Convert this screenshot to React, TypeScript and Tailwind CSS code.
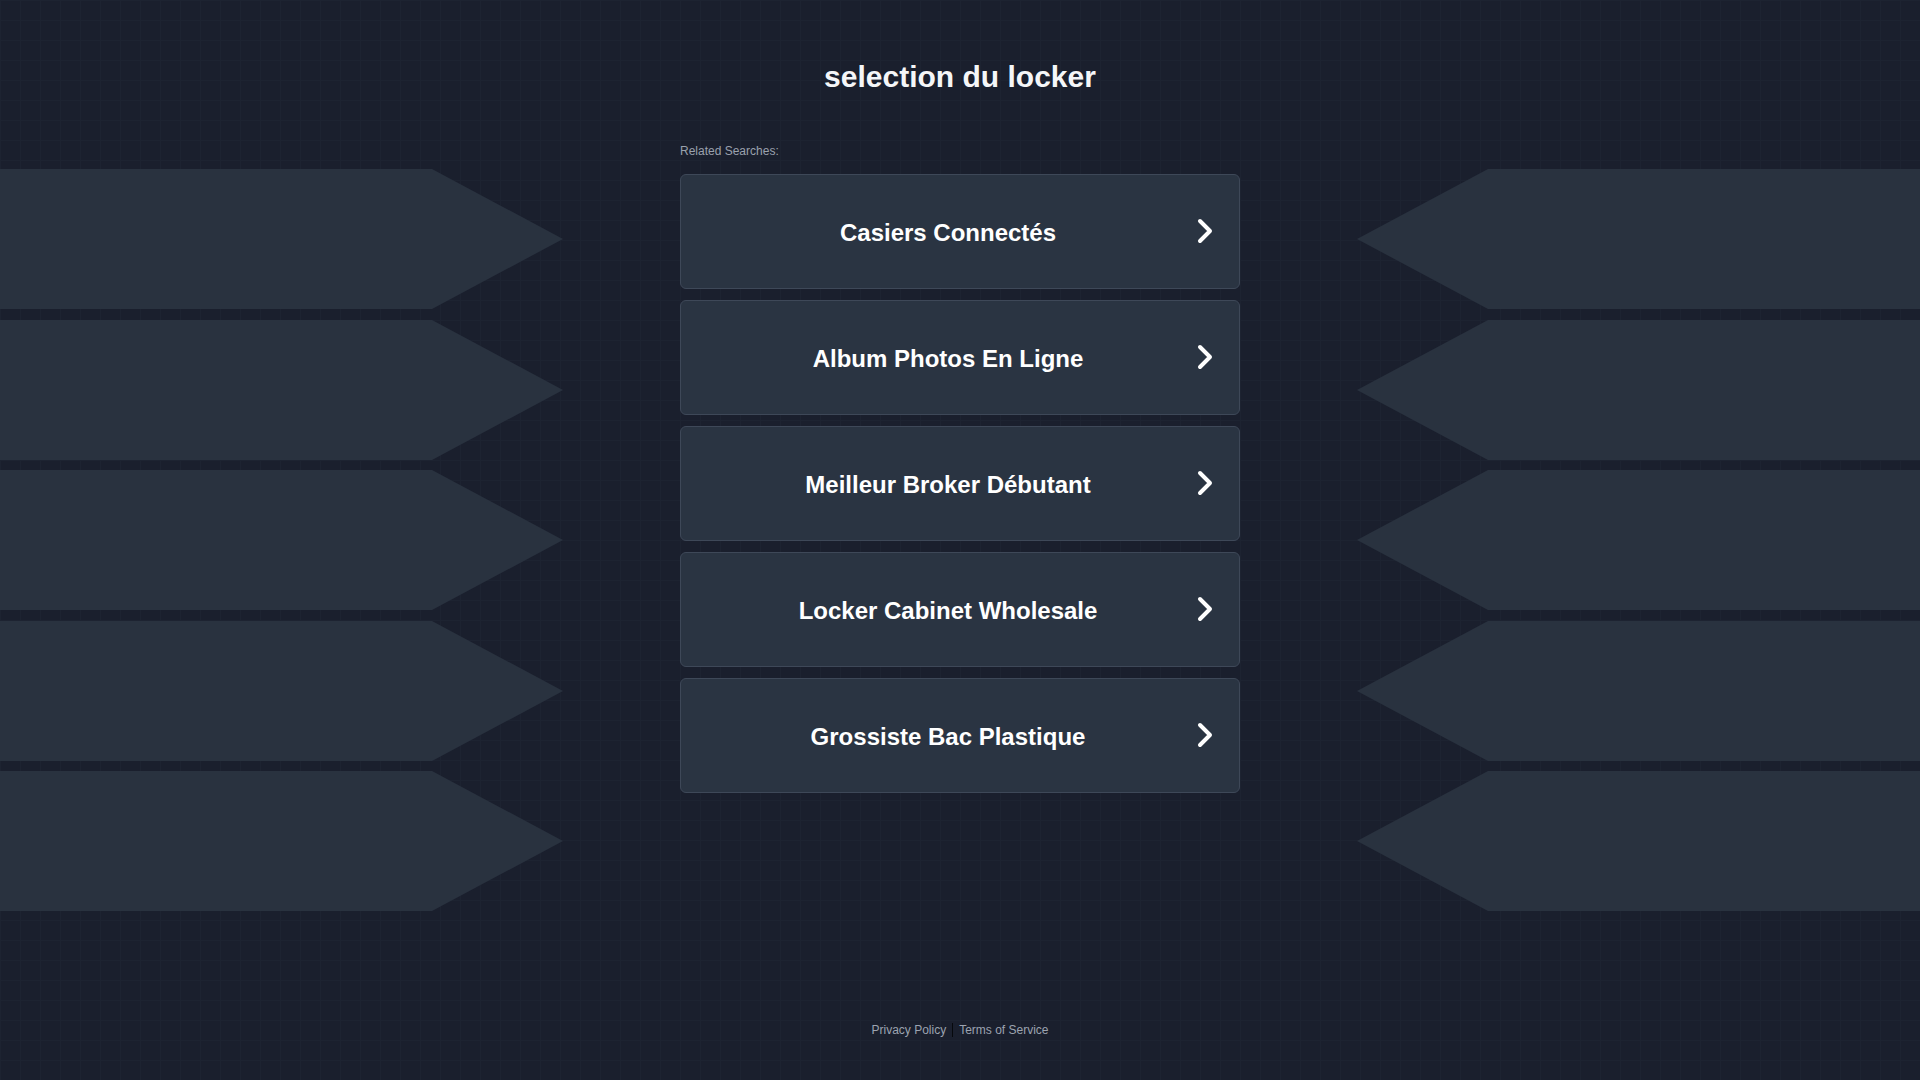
import React from "react";

const searches = [
  "Casiers Connectés",
  "Album Photos En Ligne",
  "Meilleur Broker Débutant",
  "Locker Cabinet Wholesale",
  "Grossiste Bac Plastique",
];

const shapeGaps = ["", "mt-[11px]", "mt-[10px]", "mt-[11px]", "mt-[10px]"];

const Chevron = () => (
  <svg width="16" height="26" viewBox="0 0 16 26" fill="none" className="mb-[2px] shrink-0">
    <path d="M3 3 L13 13 L3 23" stroke="#ffffff" strokeWidth="4" strokeLinecap="round" strokeLinejoin="round" />
  </svg>
);

const SideShapes = ({ side }: { side: "left" | "right" }) => {
  return (
    <div className="flex flex-col w-[563px] mt-[25px]">
      {shapeGaps.map((gap, i) => (
        <div
          key={i}
          className={
            side === "left"
              ? `h-[140px] w-full bg-[#29323f] [clip-path:polygon(0_0,432px_0,563px_50%,432px_100%,0_100%)] ${gap}`
              : `h-[140px] w-full bg-[#29323f] [clip-path:polygon(131px_0,563px_0,563px_100%,131px_100%,0_50%)] ${gap}`
          }
        />
      ))}
    </div>
  );
};

const App = () => {
  return (
    <div className="min-h-screen w-full flex flex-col bg-[#1a1f2d] bg-[linear-gradient(to_right,#1d2331_1px,transparent_1px),linear-gradient(to_bottom,#1d2331_1px,transparent_1px)] bg-[size:20px_20px] font-['Liberation_Sans',Arial,sans-serif]">
      <h1 className="pt-[59px] text-center text-[30px] leading-[36px] font-bold text-[#f5f6f8]">
        selection du locker
      </h1>

      <div className="mt-[49px] flex justify-between items-start">
        <SideShapes side="left" />

        <div className="flex flex-col w-[560px]">
          <p className="text-[12px] leading-[14px] text-[#9aa1ad]">Related Searches:</p>
          <div className="mt-[16px] flex flex-col gap-[11px]">
            {searches.map((s) => (
              <a
                key={s}
                href="#"
                className="h-[115px] flex items-center pl-[18px] pr-[26px] rounded-[6px] border border-[#3e4858] bg-[#2a3442]"
              >
                <span className="flex-1 text-center text-[24px] leading-[28px] font-bold text-white translate-y-[1px]">{s}</span>
                <Chevron />
              </a>
            ))}
          </div>
        </div>

        <SideShapes side="right" />
      </div>

      <div className="mt-auto pb-[43px] flex items-center justify-center text-[12px] leading-[14px] text-[#9ca3b0]">
        <a href="#">Privacy Policy</a>
        <span className="mx-[6px] w-px h-[14px] bg-[#06080c]" />
        <a href="#">Terms of Service</a>
      </div>
    </div>
  );
};

export default App;
